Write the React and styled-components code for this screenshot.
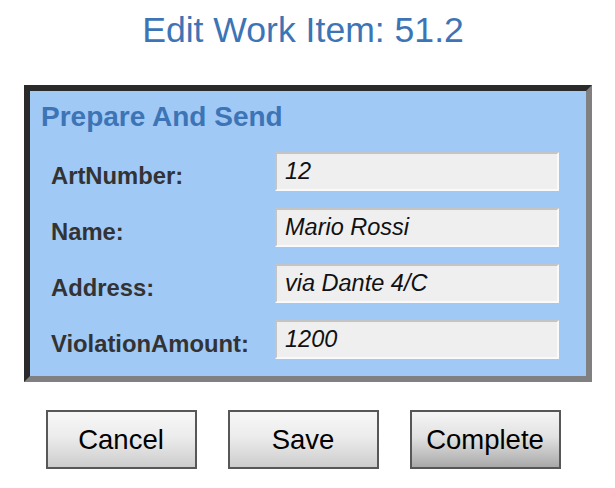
import React from "react";
import styled, { createGlobalStyle } from "styled-components";

const GlobalStyle = createGlobalStyle`
  body {
    margin: 0;
    background: #ffffff;
    font-family: "Liberation Sans", Arial, Helvetica, sans-serif;
  }
`;

const fields = [
  { label: "ArtNumber:", value: "12" },
  { label: "Name:", value: "Mario Rossi" },
  { label: "Address:", value: "via Dante 4/C" },
  { label: "ViolationAmount:", value: "1200" },
];

const App = () => {
  return (
    <Page>
      <GlobalStyle />
      <PageTitle>Edit Work Item: 51.2</PageTitle>

      <Panel>
        <PanelTitle>Prepare And Send</PanelTitle>
        <FormGrid>
          {fields.map((f) => (
            <React.Fragment key={f.label}>
              <FieldLabel>{f.label}</FieldLabel>
              <FieldInput defaultValue={f.value} />
            </React.Fragment>
          ))}
        </FormGrid>
      </Panel>

      <ButtonRow>
        <ActionButton>Cancel</ActionButton>
        <ActionButton>Save</ActionButton>
        <ActionButton $primary>Complete</ActionButton>
      </ButtonRow>
    </Page>
  );
};

export default App;

const Page = styled.div`
  width: 606px;
  display: flex;
  flex-direction: column;
`;

const PageTitle = styled.h1`
  margin: 0;
  padding-top: 10px;
  font-size: 35.6px;
  line-height: 40px;
  font-weight: normal;
  color: #3d74b5;
  text-align: center;
`;

const Panel = styled.div`
  margin: 35px 0 0 24px;
  width: 568px;
  box-sizing: border-box;
  background: #a1c9f6;
  border: 6px solid;
  border-color: #2a2a2a #808080 #808080 #2a2a2a;
  padding: 10px 26px 17px 11px;
`;

const PanelTitle = styled.h2`
  margin: 0;
  font-size: 28px;
  line-height: 32px;
  font-weight: bold;
  color: #3d74b5;
`;

const FormGrid = styled.div`
  display: grid;
  grid-template-columns: 224px 284px;
  grid-auto-rows: 39px;
  row-gap: 17px;
  margin: 19px 0 0 10px;
`;

const FieldLabel = styled.label`
  align-self: start;
  padding-top: 10px;
  font-size: 23.8px;
  line-height: 1.15;
  font-weight: bold;
  color: #333333;
  white-space: nowrap;
`;

const FieldInput = styled.input`
  box-sizing: border-box;
  width: 284px;
  height: 39px;
  margin: 0;
  padding: 0 8px;
  border: 2px solid;
  border-color: #c4c4c4 #fafafa #fafafa #c4c4c4;
  background: #efefef;
  font-family: "Liberation Sans", Arial, sans-serif;
  font-style: italic;
  font-size: 23.5px;
  color: #111111;
  outline: none;
`;

const ButtonRow = styled.div`
  display: flex;
  justify-content: center;
  gap: 31px;
  margin-top: 28px;
`;

const ActionButton = styled.button`
  box-sizing: border-box;
  width: 151px;
  height: 59px;
  padding: 0;
  border: 2px solid #575757;
  background: ${(p) =>
    p.$primary
      ? "linear-gradient(#f5f5f5, #e2e2e2 45%, #a9a9a9)"
      : "linear-gradient(#f7f7f7, #ececec 45%, #cdcdcd)"};
  font-family: "Liberation Sans", Arial, sans-serif;
  font-size: 27.5px;
  color: #000000;
  cursor: pointer;
`;
